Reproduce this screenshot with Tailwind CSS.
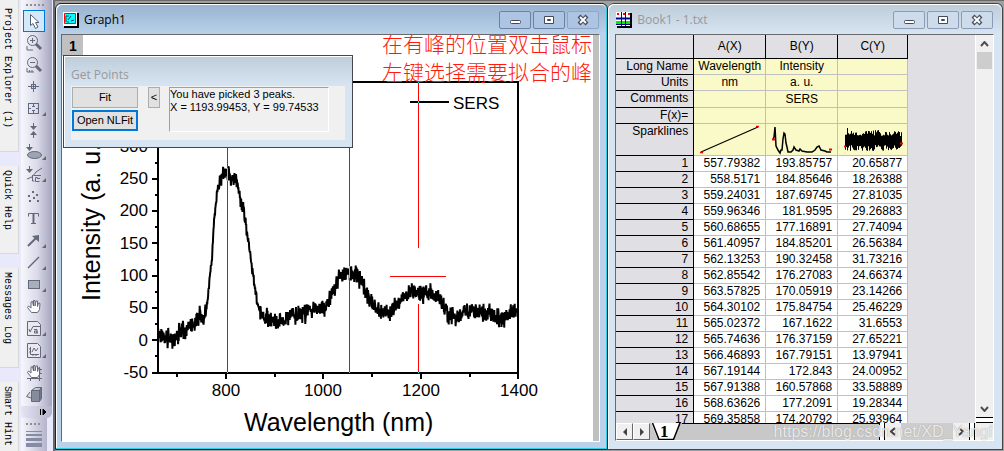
<!DOCTYPE html>
<html lang="en">
<head>
<meta charset="utf-8">
<title>Graph1</title>
<script src="https://cdn.jsdelivr.net/npm/@tailwindcss/browser@4"></script>
</head>
<body class="flex h-screen overflow-hidden bg-[#a0a0a0] font-['Liberation_Sans',Arial,sans-serif] text-black">

<!-- Docked panel tabs -->
<nav class="flex w-[21px] shrink-0 flex-col gap-[14px] overflow-hidden bg-[#e8eafb] font-['Liberation_Mono',monospace] text-[10px] leading-[14px]">
  <button class="flex h-[152px] w-[19px] shrink-0 items-center border-r border-b border-[#d8d8d8] bg-[#f0f0f0] pt-2 pr-1 text-left [writing-mode:vertical-rl]"><span class="h-full whitespace-nowrap">Project Explorer (1)</span></button>
  <button class="flex h-[88px] w-[19px] shrink-0 items-center border-r border-b border-[#d8d8d8] bg-[#f0f0f0] pt-1 pr-1 text-left [writing-mode:vertical-rl]"><span class="h-full whitespace-nowrap">Quick Help</span></button>
  <button class="flex h-[100px] w-[19px] shrink-0 items-center border-r border-b border-[#d8d8d8] bg-[#f0f0f0] pt-1 pr-1 text-left [writing-mode:vertical-rl]"><span class="h-full whitespace-nowrap">Messages Log</span></button>
  <button class="flex h-[88px] w-[19px] shrink-0 items-center border-r border-b border-[#d8d8d8] bg-[#f0f0f0] pt-1 pr-1 text-left [writing-mode:vertical-rl]"><span class="h-full whitespace-nowrap">Smart Hint</span></button>
</nav>

<!-- Tool palette -->
<aside class="flex w-[32px] shrink-0 flex-col bg-[#e8eafb] pr-px">
  <div class="flex shrink-0 flex-col overflow-hidden rounded-b-md bg-linear-to-r from-[#f7f7fd] via-[#dcdcea] to-[#a6a6c0]">
    <div class="flex h-[10px] shrink-0 items-center gap-[2px] pl-[5px]"><i class="size-[2px] bg-[#909090]"></i><i class="size-[2px] bg-[#909090]"></i><i class="size-[2px] bg-[#909090]"></i><i class="size-[2px] bg-[#909090]"></i><i class="size-[2px] bg-[#909090]"></i></div>
    <button aria-label="Pointer" class="ml-[2px] h-[22px] w-[22px] border border-[#0078d7] bg-[#d3e8f8]"><svg class="mx-auto" width="16" height="18" viewBox="0 0 16 18" fill="#fff" stroke="#50607a"><path d="M4.500 2.500v11l2.500-2 2.500 5 2.500-1.500-2.500-4.500h3.500z"/></svg></button>
    <button aria-label="Zoom in" class="h-[22px] pl-[4px]"><svg width="24" height="22" viewBox="0 0 24 22" fill="none" stroke="#62697c"><circle cx="7.500" cy="8.500" r="5"/><path d="M5 8.500h5M7.500 6v5M2 14v4h6"/><path d="M11 12l5 5" stroke-width="3"/></svg></button>
    <button aria-label="Zoom out" class="h-[22px] pl-[4px]"><svg width="24" height="22" viewBox="0 0 24 22" fill="none" stroke="#62697c"><circle cx="7.500" cy="8.500" r="5"/><path d="M5 8.500h5M2 14v4h7M4.500 16v2M7 16v2"/><path d="M11 12l5 5" stroke-width="3"/></svg></button>
    <button aria-label="Screen reader" class="h-[22px] pl-[4px]"><svg width="24" height="22" viewBox="0 0 24 22" fill="none" stroke="#62697c"><path d="M3 10.500h11M8.500 5v11"/><rect x="6.500" y="8.500" width="4" height="4"/></svg></button>
    <button aria-label="Data reader" class="h-[22px] pl-[4px]"><svg width="24" height="22" viewBox="0 0 24 22" fill="none" stroke="#62697c"><rect x="3.500" y="5.500" width="10" height="10"/><path d="M8.500 5v3M8.500 13v3M3 10.500h3M11 10.500h3M7 8.500h3M7 12.500h3"/><path d="M21 14v4h-4z" fill="#666" stroke="none"/></svg></button>
    <button aria-label="Data selector" class="h-[22px] pl-[4px]"><svg width="24" height="22" viewBox="0 0 24 22" fill="#62697c"><path d="M8 3h1v3h3l-3.500 4-3.500-4h3zM8 18h1v-3h3l-3.500-4-3.500 4h3z"/></svg></button>
    <button aria-label="Regional selector" class="h-[22px] pl-[4px]"><svg width="24" height="22" viewBox="0 0 24 22" fill="#62697c"><path d="M4 2h1v3h3l-3.500 4-3.500-4h3z"/><ellipse cx="9.500" cy="13" rx="7" ry="3.500" fill="#9da3b0" stroke="#62697c"/><path d="M21 14v4h-4z" fill="#666"/></svg></button>
    <button aria-label="Mask points" class="h-[22px] pl-[4px]"><svg width="24" height="22" viewBox="0 0 24 22" fill="#62697c"><path d="M4 2h1v3h3l-3.500 4-3.500-4h3z"/><path d="M2 15l5-2 4-5 6-4M7.500 11v6h2M9 11.500h7M12.500 13.500h-2v4h4M12 14.500h3" fill="none" stroke="#62697c"/><path d="M21 14v4h-4z" fill="#666"/></svg></button>
    <button aria-label="Draw data" class="h-[22px] pl-[4px]"><svg width="24" height="22" viewBox="0 0 24 22" fill="#62697c"><path d="M7 5h2v2H7zM3 9h2v2H3zM11 8h2v2h-2zM8 11h2v2H8zM4 14h2v2H4zM12 14h2v2h-2z"/></svg></button>
    <button aria-label="Text" class="h-[22px] pl-[4px]"><svg width="24" height="22" viewBox="0 0 24 22" fill="none" stroke="#62697c"><path d="M3.500 8.500V5.500h10v3M6 15.500h5"/><path d="M8.500 5v11" stroke-width="2"/></svg></button>
    <button aria-label="Arrow" class="h-[22px] pl-[4px]"><svg width="24" height="22" viewBox="0 0 24 22" fill="#62697c"><path d="M3 16l8-8" stroke="#62697c" stroke-width="2"/><path d="M14 5v7l-7-6z"/><path d="M21 14v4h-4z" fill="#666"/></svg></button>
    <button aria-label="Line" class="h-[22px] pl-[4px]"><svg width="24" height="22" viewBox="0 0 24 22" fill="none"><path d="M3 16L14 5" stroke="#62697c" stroke-width="1.500"/><path d="M21 14v4h-4z" fill="#666"/></svg></button>
    <button aria-label="Rectangle" class="h-[22px] pl-[4px]"><svg width="24" height="22" viewBox="0 0 24 22"><rect x="3.500" y="6.500" width="11" height="8" fill="#a9aebb" stroke="#62697c"/><path d="M21 14v4h-4z" fill="#666"/></svg></button>
    <button aria-label="Pan" class="h-[22px] pl-[4px]"><svg width="24" height="22" viewBox="0 0 24 22" fill="#fff" stroke="#62697c"><path d="M6.500 16.500L2.500 11.500l1-1.500 2.500 2V6l1.500-.5 1 4.500V4.500h1.500V10l1-5h1.500v5.500l1-3.500 1.500.5-.5 6-2 3z"/></svg></button>
    <button aria-label="Insert equation" class="h-[22px] pl-[4px]"><svg width="24" height="22" viewBox="0 0 24 22" fill="none" stroke="#62697c"><path d="M2.500 3.500h10l3 3v11h-13z" fill="#e8e8ee"/><path d="M4 11l1 3 3-5.500h7"/><path d="M9 11.500h3v3.500H9.500v-2H12v2h1"/><path d="M21 14v4h-4z" fill="#666" stroke="none"/></svg></button>
    <button aria-label="Insert graph" class="h-[22px] pl-[4px]"><svg width="24" height="22" viewBox="0 0 24 22" fill="none" stroke="#62697c"><path d="M2.500 3.500h10l3 3v11h-13z" fill="#e8e8ee"/><path d="M5.500 7v7.500H14M4 9h2M4 12h2M8 14v2M11 14v2M7 12l2-4 2 3 2-3"/><path d="M21 14v4h-4z" fill="#666" stroke="none"/></svg></button>
    <button aria-label="Rescale" class="h-[22px] pl-[4px]"><svg width="24" height="22" viewBox="0 0 24 22" fill="#fff" stroke="#62697c"><path d="M6.500 15.500L2.500 10.500l1-1.500 2.500 2V5l1.500-.5 1 4.500V3.500h1.500V9l1-5h1.500v5.500l1-3.500 1.500.5-.5 6-2 3z"/><path d="M2 16.500h15M14.500 5v14M14 7.500h3M14 11.500h3M5.500 16v3"/></svg></button>
    <button aria-label="Rotate" class="h-[22px] pl-[4px]"><svg width="24" height="22" viewBox="0 0 24 22" fill="#868c9b" stroke="#62697c"><path d="M6.500 6.500l4-3h6l-2 3z" fill="#c4c7d0"/><path d="M14.500 6.500l2-3v11l-2 3z" fill="#70768a"/><path d="M6.500 6.500h8v11h-8z"/><path d="M6 14l-4.500-1.500L5 8" fill="#d5d7de"/></svg></button>
    <div class="flex h-[12px] shrink-0 items-center justify-end bg-linear-to-r from-[#e4e4f4] to-[#b4b4cc] pr-1"><svg width="9" height="8" viewBox="0 0 9 8"><path d="M1.500 1v6M4 1v6l3-3z" stroke="#000"/></svg></div>
  </div>
  <div class="flex h-10 w-[26px] shrink-0 flex-col gap-[2px] bg-linear-to-r from-[#f7f7fd] to-[#b4b4cc] pt-[5px] pl-[5px]">
    <div class="mb-1 flex gap-[2px]"><i class="size-[2px] bg-[#909090]"></i><i class="size-[2px] bg-[#909090]"></i><i class="size-[2px] bg-[#909090]"></i><i class="size-[2px] bg-[#909090]"></i></div>
    <i class="h-px w-4 bg-[#868ca4]"></i><i class="h-[2px] w-4 bg-[#868ca4]"></i><i class="h-[3px] w-4 bg-[#868ca4]"></i><i class="h-1 w-4 bg-[#868ca4]"></i>
  </div>
</aside>

<!-- Workspace -->
<main class="flex min-w-0 flex-1 border-t border-l-2 border-[#696969] pt-[2px] pr-px pb-[1px]">

  <!-- Graph window -->
  <section class="relative flex min-w-0 flex-[553] flex-col rounded-t-md border border-[#222] bg-[#b9d1ea] shadow-[inset_-1px_-1px_0_#2bd0e4,inset_1px_1px_0_#fff]">
    <header class="mx-px mt-px flex h-[29px] shrink-0 items-center rounded-t-md bg-linear-to-b from-[#99b4d1] to-[#b9d1ea] pt-px pr-[7px] pl-[6px]">
      <svg width="16" height="16" viewBox="0 0 16 16"><path d="M1 1h15v15H1z"/><path d="M0 0h14v14H0z" fill="#fff"/><path d="M1.500 1.500h11v10h-11z" fill="#0ff" stroke="#f00"/><path d="M3 10V4h3M5 8l3-4M8 9l3-1M4 10h2" stroke="#056" fill="none"/></svg>
      <h1 class="ml-[5px] flex-1 font-['Open_Sans',sans-serif] text-[12px] leading-4">Graph1</h1>
      <div class="flex gap-[2px]">
        <button aria-label="Minimize" class="h-[18px] w-8 rounded-[2px] border border-[#6b82a4] bg-[#adc5e2]"><svg width="30" height="16"><rect x="10.500" y="8.500" width="10" height="3" rx="1" fill="#fff" stroke="#444a58"/></svg></button>
        <button aria-label="Maximize" class="h-[18px] w-8 rounded-[2px] border border-[#6b82a4] bg-[#adc5e2]"><svg width="30" height="16"><path d="M10.500 4.500h9v7h-9zM13.500 7.500h3v1h-3z" fill="#fff" stroke="#444a58"/></svg></button>
        <button aria-label="Close" class="h-[18px] w-8 rounded-[2px] border border-[#8ea6c6] bg-[#adc5e2]"><svg width="30" height="16"><path d="M11 4l8 8M19 4l-8 8" stroke="#444a58" stroke-width="4"/><path d="M12 5l6 6M18 5l-6 6" stroke="#fff" stroke-width="2"/></svg></button>
      </div>
    </header>
    <div class="mr-[7px] mb-[7px] ml-[5px] flex min-h-0 flex-1 border border-t-[#696969] border-r-white border-b-white border-l-[#696969] bg-white">
      <div class="min-w-0 flex-1">
        <svg id="chart" class="block overflow-visible" width="530" height="405" viewBox="62 35 530 405" font-family="Liberation Sans, Arial, sans-serif" font-size="17">
          <path d="M62 35h21v21H62z" fill="#c0c0c0"/>
          <text x="69" y="51" font-size="14" font-weight="bold">1</text>
          <path id="trace" fill="none" stroke="#000" stroke-width="2" stroke-linejoin="bevel"/>
          <path fill="none" stroke="#000" stroke-width="2" d="M158 82H518V373H158zM152 373h6M152 340h6M152 308h6M152 276h6M152 243h6M152 211h6M152 179h6M152 147h6M155 356h3M155 324h3M155 292h3M155 260h3M155 227h3M155 195h3M155 163h3M226 373v6M323 373v6M421 373v6M518 373v6M177 373v4M275 373v4M372 373v4M470 373v4M410 102h39"/>
          <path fill="none" stroke="#f00" d="M227.500 82v290M349.500 82v290M418.500 82v166M418.500 304v68M390 276.500h56"/>
          <path fill="none" stroke="#0ff" d="M227.500 168v13M349.500 266v12M418.500 81v2M418.500 101v2M227.500 372v1M349.500 372v1M418.500 372v1"/>
          <g text-anchor="end">
            <text x="148" y="152">300</text><text x="148" y="184">250</text><text x="148" y="216">200</text><text x="148" y="249">150</text><text x="148" y="281">100</text><text x="148" y="313">50</text><text x="148" y="346">0</text><text x="148" y="378">-50</text>
          </g>
          <g text-anchor="middle">
            <text x="226" y="396">800</text><text x="323" y="396">1000</text><text x="421" y="396">1200</text><text x="519" y="396">1400</text>
          </g>
          <text x="453" y="109">SERS</text>
          <text x="244" y="431" font-size="25">Wavelength (nm)</text>
          <text transform="translate(100 301) rotate(-90)" font-size="25">Intensity (a. u.)</text>
          <g font-family="Noto Sans CJK SC, sans-serif" font-size="21" font-weight="300" fill="#ff1a0c">
            <text x="382" y="52">在有峰的位置双击鼠标</text>
            <text x="382" y="80">左键选择需要拟合的峰</text>
          </g>
        </svg>
      </div>
      <div class="w-[6px] shrink-0 bg-[#c0c0c0]"></div>
    </div>

    <!-- Get Points dialog, floating over the graph -->
    <div role="dialog" aria-labelledby="dlg" class="absolute top-[51px] left-[7px] w-[290px] border border-[#454550] bg-[#d7e4f2] bg-linear-to-b from-[#bfcddb] to-[#d7e4f2] to-[30px] px-[7px] pb-[7px] shadow-[inset_1px_1px_0_#fff]">
      <h2 id="dlg" class="flex h-[30px] items-end pb-[3px] font-['Open_Sans',sans-serif] text-[12px] leading-4 text-[#999]">Get Points</h2>
      <div class="flex h-[54px] bg-[#f0f0f0] px-px pt-[1px] text-[11px] leading-[13px]">
        <div class="flex w-[66px] flex-col gap-[2px]">
          <button class="h-[21px] border border-[#adadad] bg-[#e1e1e1]">Fit</button>
          <button class="h-[21px] border-2 border-[#0078d7] bg-[#e1e1e1] whitespace-nowrap">Open NLFit</button>
        </div>
        <button class="ml-[10px] h-[21px] w-3 border border-[#adadad] bg-[#e1e1e1]">&lt;</button>
        <output class="ml-[9px] h-[45px] w-40 border border-t-[#a0a0a0] border-r-white border-b-white border-l-[#a0a0a0] whitespace-nowrap">You have picked 3 peaks.<br>X = 1193.99453, Y = 99.74533</output>
      </div>
    </div>
  </section>

  <!-- Workbook window -->
  <section class="flex min-w-0 flex-[395] flex-col rounded-t-md border border-l-0 border-[#444] bg-[#d7e4f2] shadow-[inset_1px_1px_0_#fff]">
    <header class="mx-px mt-px flex h-[29px] shrink-0 items-center rounded-t-md bg-linear-to-b from-[#bfcddb] to-[#d7e4f2] pt-px pr-2 pl-[7px]">
      <svg width="16" height="16" viewBox="0 0 16 16"><path d="M1 1h15v15H1z"/><path d="M0 0h14v14H0z" fill="#fff"/><path d="M0 6.500h14M0 10.500h14" stroke="#0e0" stroke-width="3"/><path d="M0 6.500h14M0 12.500h14M5.500 0v14M9.500 0v14" stroke="#009"/><path d="M1 1h2v2H1zM7 1h2v2H7zM12 1h2v2h-2z" fill="#f00"/></svg>
      <h1 class="ml-[5px] flex-1 font-['Open_Sans',sans-serif] text-[12px] leading-4 text-[#999]">Book1 - 1.txt</h1>
      <div class="flex gap-[2px]">
        <button aria-label="Minimize" class="h-[18px] w-8 rounded-[2px] border border-[#8c9bb8] bg-[#cedbea]"><svg width="30" height="16"><rect x="10.500" y="8.500" width="10" height="3" rx="1" fill="#fff" stroke="#444a58"/></svg></button>
        <button aria-label="Maximize" class="h-[18px] w-8 rounded-[2px] border border-[#8c9bb8] bg-[#cedbea]"><svg width="30" height="16"><path d="M10.500 4.500h9v7h-9zM13.500 7.500h3v1h-3z" fill="#fff" stroke="#444a58"/></svg></button>
        <button aria-label="Close" class="h-[18px] w-8 rounded-[2px] border border-[#8c9bb8] bg-[#cedbea]"><svg width="30" height="16"><path d="M11 4l8 8M19 4l-8 8" stroke="#444a58" stroke-width="4"/><path d="M12 5l6 6M18 5l-6 6" stroke="#fff" stroke-width="2"/></svg></button>
      </div>
    </header>
    <div class="relative mr-2 mb-2 ml-[7px] flex min-h-0 flex-1 flex-col border border-t-[#696969] border-r-white border-b-white border-l-[#696969] bg-[#e0dfe4]">
      <div class="flex min-h-0 flex-1">
        <div class="min-w-0 flex-1 overflow-hidden">
          <table class="w-[292px] table-fixed border-separate border-spacing-0 text-[12px] leading-[15px]">
            <colgroup><col class="w-[78px]"><col class="w-[72px]"><col class="w-[72px]"><col class="w-[70px]"></colgroup>
            <thead>
              <tr class="h-6 *:border-r *:border-b *:border-black *:p-0 *:font-normal"><th></th><th scope="col">A(X)</th><th scope="col">B(Y)</th><th scope="col">C(Y)</th></tr>
            </thead>
            <tbody id="labels" class="[&_td]:border-r [&_td]:border-b [&_td]:border-[#c0c0c0] [&_td]:bg-[#fafac8] [&_td]:p-0 [&_td]:text-center [&_th]:border-r [&_th]:border-b [&_th]:border-black [&_th]:p-0 [&_th]:pr-[5px] [&_th]:text-right [&_th]:align-top [&_th]:font-normal">
              <tr class="h-4"><th scope="row">Long Name</th><td>Wavelength</td><td>Intensity</td><td></td></tr>
              <tr class="h-4"><th scope="row">Units</th><td>nm</td><td>a. u.</td><td></td></tr>
              <tr class="h-[17px]"><th scope="row">Comments</th><td></td><td>SERS</td><td></td></tr>
              <tr class="h-4"><th scope="row">F(x)=</th><td></td><td></td><td></td></tr>
              <tr class="h-8"><th scope="row">Sparklines</th>
                <td><svg class="block" width="71" height="31" fill="none"><path d="M7 28L64 3" stroke="#000" stroke-width="1.200"/><path d="M6 28.500h3M62 2.500h3" stroke="#f00" stroke-width="1.500"/></svg></td>
                <td><svg class="block" width="71" height="31" fill="none"><path d="M7 15l1-2 1-10 1 19 2 4 2 3 1-3 1 0 1-11 1-6 1 1 1 9 1 4 1 5 3 0 2-2 1-3 2 3 3 1 1-2 2 2 5 1 5 0 3-2 2-3 2-1 2 4 4 1 2 1h4" stroke="#000" stroke-width="1.500"/><path d="M6 15.500h3M63 25.500h3" stroke="#f00" stroke-width="2"/></svg></td>
                <td><svg class="block" width="69" height="31" fill="none"><path id="noise" stroke="#000"/><path d="M6 22.500h2M62 19.500h3" stroke="#f00" stroke-width="2"/></svg></td></tr>
            </tbody>
            <tbody id="rows" class="[&_td]:border-r [&_td]:border-b [&_td]:border-[#c0c0c0] [&_td]:bg-white [&_td]:p-0 [&_td]:pr-[5px] [&_td]:text-right [&_th]:border-r [&_th]:border-b [&_th]:border-black [&_th]:p-0 [&_th]:pr-[5px] [&_th]:text-right [&_th]:font-normal"></tbody>
          </table>
        </div>
        <div class="flex w-[18px] shrink-0 flex-col items-center border-l border-white bg-[#f0f0f0]">
          <button aria-label="Scroll up" class="h-[17px] w-full"><svg class="mx-auto" width="9" height="6" fill="none"><path d="M1 5l3.500-4L8 5" stroke="#505050" stroke-width="2"/></svg></button>
          <div class="h-[17px] w-[15px] bg-[#cdcdcd]"></div>
          <button aria-label="Scroll down" class="mt-auto h-[17px] w-full"><svg class="mx-auto" width="9" height="6" fill="none"><path d="M1 1l3.500 4L8 1" stroke="#505050" stroke-width="2"/></svg></button>
          <div class="h-[6px] w-full border-y border-black bg-white"></div>
        </div>
      </div>
      <footer class="flex h-[17px] shrink-0 bg-[#c8c8c8]">
        <button aria-label="Previous sheet" class="flex w-[17px] items-center justify-center border border-t-white border-r-[#696969] border-b-[#696969] border-l-white bg-[#f0f0f0]"><svg width="4" height="8"><path d="M4 0v8L0 4z" fill="#444"/></svg></button>
        <button aria-label="Next sheet" class="flex w-[17px] items-center justify-center border border-t-white border-r-[#696969] border-b-[#696969] border-l-white bg-[#f0f0f0]"><svg width="4" height="8"><path d="M0 0v8l4-4z" fill="#444"/></svg></button>
        <button class="h-[17px] w-[32px]"><svg width="32" height="17" viewBox="0 0 32 17"><path d="M1 0L8 16.500H24L30 0z" fill="#fff"/><path d="M2.500 0L9 16.500H23.500L30 0" fill="none" stroke="#000" stroke-width="1.500"/><text x="10" y="14" font-family="Liberation Serif, serif" font-size="17" font-weight="bold">1</text></svg></button>
        <div class="flex-1 border-t border-black"></div>
        <div class="w-[6px] border-x border-black bg-white"></div>
        <button aria-label="Scroll left" class="flex w-4 items-center justify-center bg-[#f0f0f0]"><svg width="6" height="9" fill="none"><path d="M5 1L1 4.500 5 8" stroke="#404040" stroke-width="2"/></svg></button>
        <div class="w-[52px] bg-[#cdcdcd]"></div>
        <button aria-label="Scroll right" class="flex w-4 items-center justify-center bg-[#f0f0f0]"><svg width="6" height="9" fill="none"><path d="M1 1l4 3.500L1 8" stroke="#404040" stroke-width="2"/></svg></button>
        <div class="w-[6px] border-x border-black bg-white"></div>
        <div class="w-[18px] bg-[#f0f0f0]"></div>
      </footer>
      <span class="pointer-events-none absolute right-0 -bottom-px text-[16px] leading-[18px] whitespace-nowrap text-white/80 [text-shadow:0_0_1px_#888]">https://blog.csdn.net/XD_Yangf</span>
    </div>
  </section>
</main>

<script>
const data = [
  ['557.79382','193.85757','20.65877'],['558.5171','184.85646','18.26388'],['559.24031','187.69745','27.81035'],
  ['559.96346','181.9595','29.26883'],['560.68655','177.16891','27.74094'],['561.40957','184.85201','26.56384'],
  ['562.13253','190.32458','31.73216'],['562.85542','176.27083','24.66374'],['563.57825','170.05919','23.14266'],
  ['564.30102','175.84754','25.46229'],['565.02372','167.1622','31.6553'],['565.74636','176.37159','27.65221'],
  ['566.46893','167.79151','13.97941'],['567.19144','172.843','24.00952'],['567.91388','160.57868','33.58889'],
  ['568.63626','177.2091','19.28344'],['569.35858','174.20792','25.93964']];
document.getElementById('rows').innerHTML = data.map((r, i) =>
  `<tr class="h-4"><th scope="row">${i + 1}</th>${r.map(v => `<td>${v}</td>`).join('')}</tr>`).join('');

// Seeded noise keeps the trace identical on every load
let seed = 7;
const rnd = () => (seed = (seed * 16807) % 2147483647) / 2147483647;
const gauss = () => (rnd() + rnd() + rnd() - 1.5) / 1.5;

const base = [[158,330],[161,335],[165,338],[175,338],[182,332],[188,326],[193,325],[200,316],[203,319],[207,305],[209,287],[212,257],[214,220],[217,193],[220,180],[223,173],[228,174],[233,177],[237,183],[240,198],[244,213],[247,233],[250,253],[254,282],[257,300],[260,313],[265,317],[273,321],[285,320],[293,313],[300,317],[310,309],[322,307],[327,305],[330,295],[335,288],[340,275],[345,272],[352,273],[357,275],[362,283],[368,295],[373,307],[382,314],[390,310],[397,302],[405,297],[413,292],[422,292],[430,293],[438,298],[445,308],[448,315],[455,318],[463,314],[472,310],[480,315],[488,312],[495,317],[503,317],[512,312],[517,311]];
let d = '', k = 0;
for (let x = 158; x <= 517; x += 0.3) {
  while (x > base[k + 1][0]) k++;
  const [x0, y0] = base[k], [x1, y1] = base[k + 1];
  const slope = Math.abs((y1 - y0) / (x1 - x0));
  const y = y0 + (y1 - y0) * (x - x0) / (x1 - x0) + gauss() * (slope > 4 ? 7 : 13);
  d += (d ? 'L' : 'M') + x.toFixed(1) + ' ' + y.toFixed(1);
}
document.getElementById('trace').setAttribute('d', d);

let n = '';
for (let x = 7; x < 64; x += 1) n += `M${x + 0.5} ${(x === 9 ? 4 : 12 - rnd() * 6).toFixed(1)}V${(21 + rnd() * 6).toFixed(1)}`;
document.getElementById('noise').setAttribute('d', n);
</script>
</body>
</html>
